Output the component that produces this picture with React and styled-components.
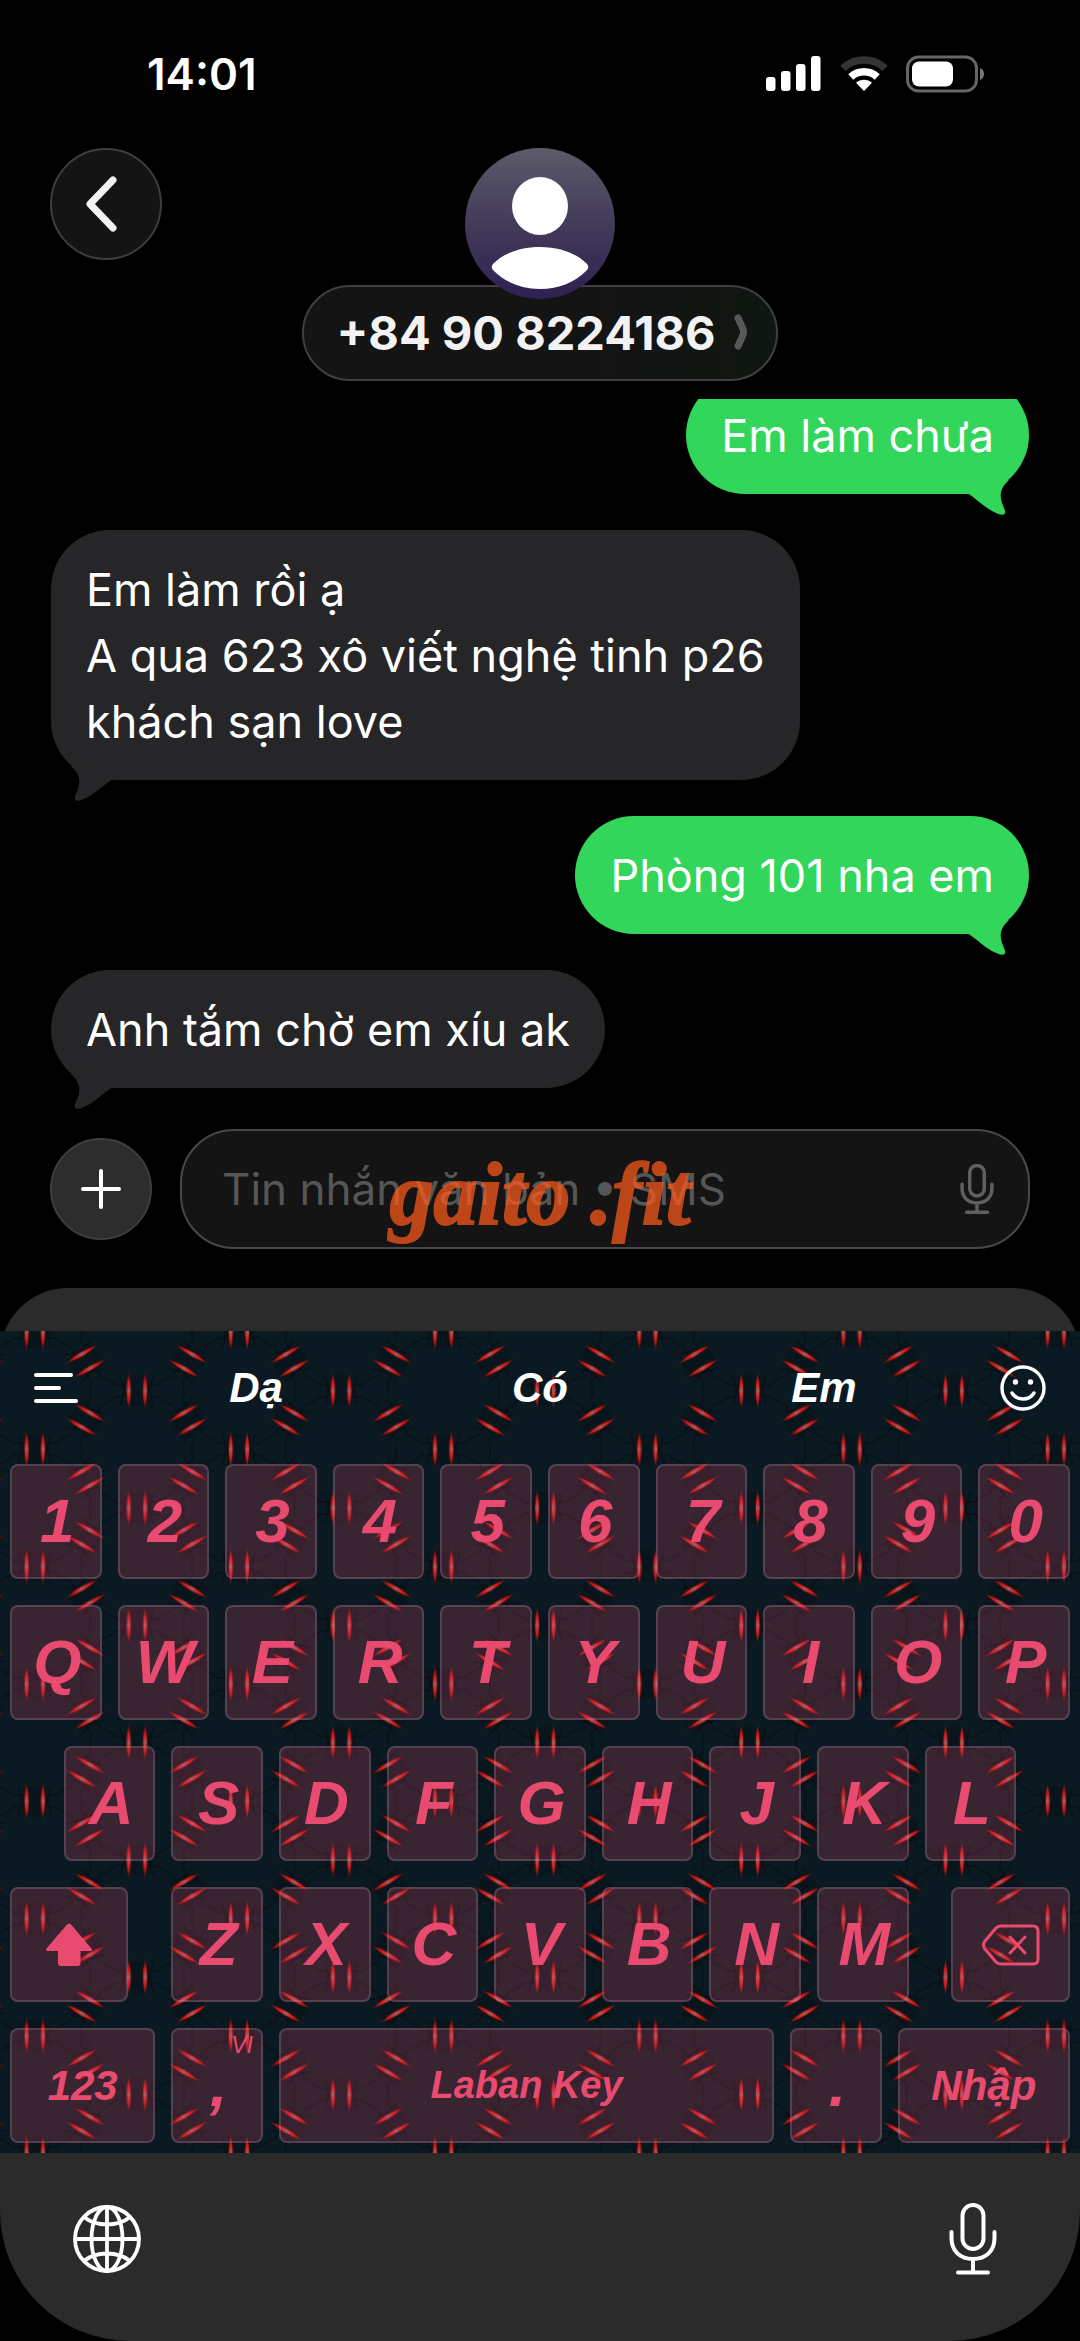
import React from 'react';
import styled, { createGlobalStyle } from 'styled-components';

const GlobalStyle = createGlobalStyle`
  * {
    box-sizing: border-box;
  }

  body {
    margin: 0;
    background: #000;
    color: #fff;
    font-family: Inter, "Liberation Sans", sans-serif;
  }

  button {
    margin: 0;
    padding: 0;
    border: 0;
    background: none;
    color: inherit;
    font: inherit;
    cursor: pointer;
  }

  svg {
    display: block;
  }
`;

const Screen = styled.div`
  min-height: 100vh;
  display: flex;
  flex-direction: column;
  overflow: hidden;
`;

const StatusBar = styled.div`
  height: 148px;
  padding: 0 94px 0 147px;
  display: flex;
  align-items: center;
  justify-content: space-between;
`;

const Clock = styled.time`
  font-size: 44px;
  font-weight: 600;
`;

const StatusIcons = styled.div`
  display: flex;
  align-items: center;
  gap: 18px;
`;

const Header = styled.header`
  display: grid;
  grid-template-columns: 1fr auto 1fr;
  align-items: start;
  padding: 0 50px 18px;
`;

const RoundButton = styled.button`
  width: ${(props) => props.$size}px;
  height: ${(props) => props.$size}px;
  display: flex;
  flex: none;
  align-items: center;
  justify-content: center;
  border: 2px solid #3e3e3e;
  border-radius: 50%;
  background: ${(props) => props.$fill};
`;

const Contact = styled.div`
  display: flex;
  flex-direction: column;
  align-items: center;
`;

const Avatar = styled.div`
  width: 150px;
  height: 151px;
  position: relative;
  z-index: 1;
  border-radius: 50%;
  background: linear-gradient(#5c5a6a, #433b5a 50%, #2d2150);
`;

const NamePill = styled.button`
  height: 96px;
  margin-top: -14px;
  padding: 0 28px 2px 32px;
  display: flex;
  align-items: center;
  gap: 18px;
  border: 2px solid #404040;
  border-radius: 48px;
  background: linear-gradient(90deg, #141414 60%, #0f1711);
  color: #f2f2f2;
  font-size: 47px;
  font-weight: 700;
`;

const Thread = styled.main`
  flex: 1;
  overflow: hidden;
`;

// The list is scrolled a little, so the first bubble is cut by the header.
const MessageList = styled.ul`
  margin: -23px 0 0;
  padding: 0 51px 40px;
  display: flex;
  flex-direction: column;
  gap: 36px;
  list-style: none;
`;

const Bubble = styled.li`
  position: relative;
  padding: 27px 35px 25px;
  border-radius: 59px;
  align-self: ${(props) => (props.$sent ? 'flex-end' : 'flex-start')};
  background: ${(props) => (props.$sent ? '#32d65b' : '#262628')};
  color: #fff;
  font-size: 45px;
  line-height: 66px;
  white-space: pre-line;
`;

const Tail = styled.svg`
  position: absolute;
  bottom: -21px;
  ${(props) => (props.$sent ? 'right: 15px;' : 'left: 15px; transform: scaleX(-1);')}
  fill: ${(props) => (props.$sent ? '#32d65b' : '#262628')};
`;

const Composer = styled.form`
  position: relative;
  padding: 0 50px 39px;
  display: flex;
  align-items: center;
  gap: 28px;
`;

const Field = styled.label`
  height: 120px;
  min-width: 0;
  flex: 1;
  display: flex;
  align-items: center;
  padding: 0 34px 0 40px;
  border: 2px solid #484848;
  border-radius: 54px;
  background: #141414;
`;

const MessageInput = styled.input`
  min-width: 0;
  flex: 1;
  padding: 0;
  border: 0;
  outline: 0;
  background: none;
  color: #fff;
  font: 44px/66px Inter, "Liberation Sans", sans-serif;

  &::placeholder {
    color: #565656;
    opacity: 1;
  }
`;

const Watermark = styled.div`
  position: absolute;
  top: 18px;
  left: 0;
  right: 0;
  display: flex;
  justify-content: center;
  gap: 20px;
  color: #ff5a1c;
  opacity: 0.72;
  font: italic bold 88px/96px "Liberation Serif", serif;
  -webkit-text-stroke: 2px #ff5a1c;
  pointer-events: none;
`;

const Keyboard = styled.section`
  padding-top: 43px;
  border-radius: 68px 68px 130px 130px;
  background: #2b2b2b;
`;

const Skin = styled.div`
  position: relative;
  background: #0b1a22;
  font-family: "Liberation Sans", Arial, sans-serif;
  font-style: italic;
  font-weight: 700;
`;

const SkinArt = styled.svg`
  position: absolute;
  inset: 0;
  width: 100%;
  height: 100%;
`;

const Suggestions = styled.div`
  position: relative;
  height: 133px;
  padding-bottom: 20px;
  display: flex;
`;

const ToolButton = styled.button`
  width: 114px;
  padding: 0 34px;
  display: flex;
  align-items: center;
  justify-content: ${(props) => props.$side};
`;

const Suggestion = styled.button`
  flex: 1;
  font-size: 42px;
`;

const Keys = styled.div`
  position: relative;
  padding: 0 10px 10px;
  display: grid;
  grid-template-columns: repeat(40, minmax(0, 1fr));
  grid-auto-rows: 115px;
  gap: 26px 16px;
`;

const Key = styled.button`
  grid-column: ${(props) => props.$start} / span ${(props) => props.$span};
  position: relative;
  padding: ${(props) => (props.$size > 60 ? '0 0 2px 3px' : '0')};
  display: flex;
  align-items: center;
  justify-content: center;
  border: 2px solid rgba(190, 170, 195, 0.22);
  border-radius: 8px;
  background: rgba(233, 74, 112, 0.21);
  color: #e94b70;
  font-size: ${(props) => props.$size}px;
`;

const KeyHint = styled.span`
  position: absolute;
  top: 2px;
  right: 8px;
  font-size: 23px;
  font-weight: 400;
`;

const KeyboardFooter = styled.footer`
  padding: 50px 82px 66px 72px;
  display: flex;
  align-items: center;
  justify-content: space-between;
`;

const letterKeys = (text, start) =>
  text.split('').map((label, i) => ({ label, start: start + i * 4, span: 4, size: 62 }));

const KEYS = [
  ...letterKeys('1234567890', 1),
  ...letterKeys('QWERTYUIOP', 1),
  ...letterKeys('ASDFGHJKL', 3),
  { label: 'Shift', icon: 'shift', start: 1, span: 5 },
  ...letterKeys('ZXCVBNM', 7),
  { label: 'Backspace', icon: 'backspace', start: 36, span: 5 },
  { label: '123', start: 1, span: 6, size: 42 },
  { label: ',', hint: 'VI', start: 7, span: 4, size: 62 },
  { label: 'Laban Key', start: 11, span: 19, size: 38 },
  { label: '.', start: 30, span: 4, size: 62 },
  { label: 'Nhập', start: 34, span: 7, size: 42 },
];

const MESSAGES = [
  { sent: true, text: 'Em làm chưa' },
  { sent: false, text: 'Em làm rồi ạ\nA qua 623 xô viết nghệ tinh p26\nkhách sạn love' },
  { sent: true, text: 'Phòng 101 nha em' },
  { sent: false, text: 'Anh tắm chờ em xíu ak' },
];

// One repeat of the skin, on a hexagonal grid.
const TILE_W = 204.2;
const TILE_H = 117.3;

const SPARKS = [
  [0, 0, 0],
  [TILE_W, 0, 0],
  [0, TILE_H, 0],
  [TILE_W, TILE_H, 0],
  [102.1, 58.65, 0],
  [51, 29.3, 60],
  [51, 88, -60],
  [153.1, 29.3, -60],
  [153.1, 88, 60],
];

const JOINTS = [
  [34.3, 0, 0],
  [34.3, TILE_H, 0],
  [169.9, 0, 180],
  [169.9, TILE_H, 180],
  [67.8, 58.65, 180],
  [136.4, 58.65, 0],
];

const SkinPattern = () => (
  <SkinArt aria-hidden="true">
    <defs>
      <linearGradient id="spark" x1="0" y1="0" x2="0" y2="1">
        <stop offset="0" stopColor="#8c1414" />
        <stop offset="0.3" stopColor="#e01c1a" />
        <stop offset="0.5" stopColor="#a8585c" />
        <stop offset="0.7" stopColor="#e01c1a" />
        <stop offset="1" stopColor="#8c1414" />
      </linearGradient>
      <pattern id="skin" x="34.8" y="1" width={TILE_W} height={TILE_H} patternUnits="userSpaceOnUse">
        {JOINTS.map(([x, y, turn]) =>
          [0, 120, 240].map((step) => (
            <path
              key={`${x}-${y}-${step}`}
              transform={`translate(${x} ${y}) rotate(${turn + step})`}
              d="M-4 -22C2 -24 4 -19 9 -19C17 -20 18 -14 12 -10C10 -7 15 -4 12 0C15 4 10 7 12 10C18 14 17 20 9 19C4 19 2 24 -4 22"
              fill="none"
              stroke="#040c11"
              strokeWidth="1.6"
              opacity="0.7"
            />
          ))
        )}
        {SPARKS.map(([x, y, turn]) => (
          <g key={`${x}-${y}`} transform={`translate(${x} ${y}) rotate(${turn})`}>
            <rect x="-12" y="-16" width="24" height="32" rx="4" fill="#060f14" opacity="0.45" />
            {[-8.2, 8.2].map((dx) => (
              <g key={dx} transform={`translate(${dx} 0)`}>
                <path d="M0 -18Q6 0 0 18Q-6 0 0 -18Z" fill="#8a0d0d" opacity="0.4" />
                <path d="M0 -16Q3.6 0 0 16Q-3.6 0 0 -16Z" fill="url(#spark)" />
              </g>
            ))}
          </g>
        ))}
      </pattern>
    </defs>
    <rect width="100%" height="100%" fill="url(#skin)" />
  </SkinArt>
);

const SignalIcon = () => (
  <svg width="56" height="36" viewBox="0 0 56 36" fill="#fff" aria-hidden="true">
    <rect x="0" y="21" width="9.5" height="14" rx="3" />
    <rect x="15" y="15" width="9.5" height="20" rx="3" />
    <rect x="30" y="8" width="9.5" height="27" rx="3" />
    <rect x="45" y="0" width="9.5" height="35" rx="3" />
  </svg>
);

const WifiIcon = () => (
  <svg width="48" height="36" viewBox="-24 -35 48 36" fill="none" aria-hidden="true">
    <path d="M-21.1 -22.7A31 31 0 0 1 21.1 -22.7" stroke="#333" strokeWidth="7.5" />
    <path d="M-13.2 -14.1A19.3 19.3 0 0 1 13.2 -14.1" stroke="#fff" strokeWidth="7.5" />
    <path d="M0 0L-8 -8.2A11.7 11.7 0 0 1 8 -8.2Z" fill="#fff" />
  </svg>
);

const BatteryIcon = () => (
  <svg width="80" height="38" viewBox="0 0 80 38" aria-hidden="true">
    <rect x="1.5" y="2" width="69" height="34" rx="11" fill="none" stroke="#666" strokeWidth="3" />
    <rect x="6" y="6.5" width="41" height="25" rx="7" fill="#fff" />
    <path d="M74 13A6.5 6.5 0 0 1 74 25Z" fill="#777" />
  </svg>
);

const BackIcon = () => (
  <svg width="40" height="60" viewBox="0 0 40 60" fill="none" aria-hidden="true">
    <path d="M27 6L4 30L27 54" stroke="#f2f2f2" strokeWidth="7" strokeLinecap="round" strokeLinejoin="round" />
  </svg>
);

const PersonIcon = () => (
  <svg width="150" height="151" viewBox="0 0 150 151" fill="#fff" aria-hidden="true">
    <ellipse cx="75" cy="58" rx="28" ry="29" />
    <path d="M75 99C97 99 113 107 121 115C124 118 124 120 121 123C110 134 94 141 75 141S40 134 29 123C26 120 26 118 29 115C37 107 53 99 75 99Z" />
  </svg>
);

const DetailIcon = () => (
  <svg width="14" height="36" viewBox="0 0 14 36" fill="none" aria-hidden="true">
    <path d="M4 4L9 15Q10 18 9 21L4 32" stroke="#585858" strokeWidth="7" strokeLinecap="round" />
  </svg>
);

const PlusIcon = () => (
  <svg width="40" height="40" viewBox="0 0 40 40" fill="none" aria-hidden="true">
    <path d="M20 2V38M2 20H38" stroke="#fff" strokeWidth="4" strokeLinecap="round" />
  </svg>
);

const MicIcon = ({ width, height, color, stroke }) => (
  <svg width={width} height={height} viewBox="0 0 48 72" fill="none" stroke={color} strokeWidth={stroke} strokeLinecap="round" aria-hidden="true">
    <rect x="13.5" y="2" width="21" height="44" rx="10.5" />
    <path d="M2.5 29V35C2.5 48 11 56 24 56S45.5 48 45.5 35V29M24 57V69M9 69.5H39" />
  </svg>
);

const MenuIcon = () => (
  <svg width="46" height="32" viewBox="0 0 46 32" fill="none" aria-hidden="true">
    <path d="M2 3H37M2 16H25M2 29H42" stroke="#fff" strokeWidth="4" strokeLinecap="round" />
  </svg>
);

const SmileIcon = () => (
  <svg width="46" height="46" viewBox="0 0 46 46" fill="none" stroke="#fff" aria-hidden="true">
    <circle cx="23" cy="23" r="21" strokeWidth="3.4" />
    <circle cx="15.5" cy="17" r="2.7" fill="#fff" stroke="none" />
    <circle cx="30.5" cy="17" r="2.7" fill="#fff" stroke="none" />
    <path d="M12 28C17 36 29 36 34 28" strokeWidth="3.4" strokeLinecap="round" />
  </svg>
);

const ShiftIcon = () => (
  <svg width="48" height="44" viewBox="0 0 48 44" fill="#e94b70" aria-hidden="true">
    <path d="M22 1.5Q24 0 26 1.5L46.5 25.5Q48 28 45 28H35.5V40Q35.5 43 32.5 43H16Q13 43 13 40V28H3Q0 28 1.5 25.5Z" />
  </svg>
);

const BackspaceIcon = () => (
  <svg width="58" height="42" viewBox="0 0 58 42" fill="none" stroke="#e94b70" strokeLinecap="round" strokeLinejoin="round" aria-hidden="true">
    <path d="M19 2H51Q56 2 56 7V35Q56 40 51 40H19Q16 40 14 38L3 25Q0 21 3 17L14 4Q16 2 19 2Z" strokeWidth="3" />
    <path d="M28 13L43 29M43 13L28 29" strokeWidth="3" />
  </svg>
);

const GlobeIcon = () => (
  <svg width="70" height="70" viewBox="0 0 70 70" fill="none" stroke="#fff" strokeWidth="3.8" aria-hidden="true">
    <circle cx="35" cy="35" r="32" />
    <ellipse cx="35" cy="35" rx="15.5" ry="32" />
    <path d="M35 2V68M2 35H68M12 13C24 23 46 23 58 13M12 57C24 47 46 47 58 57" />
  </svg>
);

const keyIcons = { shift: <ShiftIcon />, backspace: <BackspaceIcon /> };

const App = () => (
  <Screen>
    <GlobalStyle />
    <StatusBar>
      <Clock>14:01</Clock>
      <StatusIcons>
        <SignalIcon />
        <WifiIcon />
        <BatteryIcon />
      </StatusIcons>
    </StatusBar>
    <Header>
      <RoundButton type="button" $size={112} $fill="#141414" aria-label="Back">
        <BackIcon />
      </RoundButton>
      <Contact>
        <Avatar>
          <PersonIcon />
        </Avatar>
        <NamePill type="button">
          +84 90 8224186
          <DetailIcon />
        </NamePill>
      </Contact>
    </Header>
    <Thread>
      <MessageList>
        {MESSAGES.map(({ sent, text }) => (
          <Bubble key={text} $sent={sent}>
            {text}
            <Tail $sent={sent} width="52" height="38" viewBox="0 0 52 38" aria-hidden="true">
              <path d="M0 10L6 16.5C16 23 26 34 38 37.5C44 39 44 35 42 31C37 20 37 12 47 3L30 0H0Z" />
            </Tail>
          </Bubble>
        ))}
      </MessageList>
    </Thread>
    <Composer>
      <RoundButton type="button" $size={102} $fill="#2d2d2d" aria-label="Add">
        <PlusIcon />
      </RoundButton>
      <Field>
        <MessageInput type="text" aria-label="Message" placeholder="Tin nhắn văn bản • SMS" />
        <MicIcon width={34} height={50} color="#606060" stroke={5} />
      </Field>
      <Watermark>
        <span>gaito</span>
        <span>.fit</span>
      </Watermark>
    </Composer>
    <Keyboard>
      <Skin>
        <SkinPattern />
        <Suggestions>
          <ToolButton type="button" $side="flex-start" aria-label="Menu">
            <MenuIcon />
          </ToolButton>
          <Suggestion type="button">Dạ</Suggestion>
          <Suggestion type="button">Có</Suggestion>
          <Suggestion type="button">Em</Suggestion>
          <ToolButton type="button" $side="flex-end" aria-label="Emoji">
            <SmileIcon />
          </ToolButton>
        </Suggestions>
        <Keys>
          {KEYS.map(({ label, icon, hint, start, span, size }) => (
            <Key key={label} type="button" aria-label={label} $start={start} $span={span} $size={size || 42}>
              {icon ? keyIcons[icon] : label}
              {hint && <KeyHint>{hint}</KeyHint>}
            </Key>
          ))}
        </Keys>
      </Skin>
      <KeyboardFooter>
        <button type="button" aria-label="Next keyboard">
          <GlobeIcon />
        </button>
        <button type="button" aria-label="Dictate">
          <MicIcon width={50} height={72} color="#fff" stroke={4} />
        </button>
      </KeyboardFooter>
    </Keyboard>
  </Screen>
);

export default App;
